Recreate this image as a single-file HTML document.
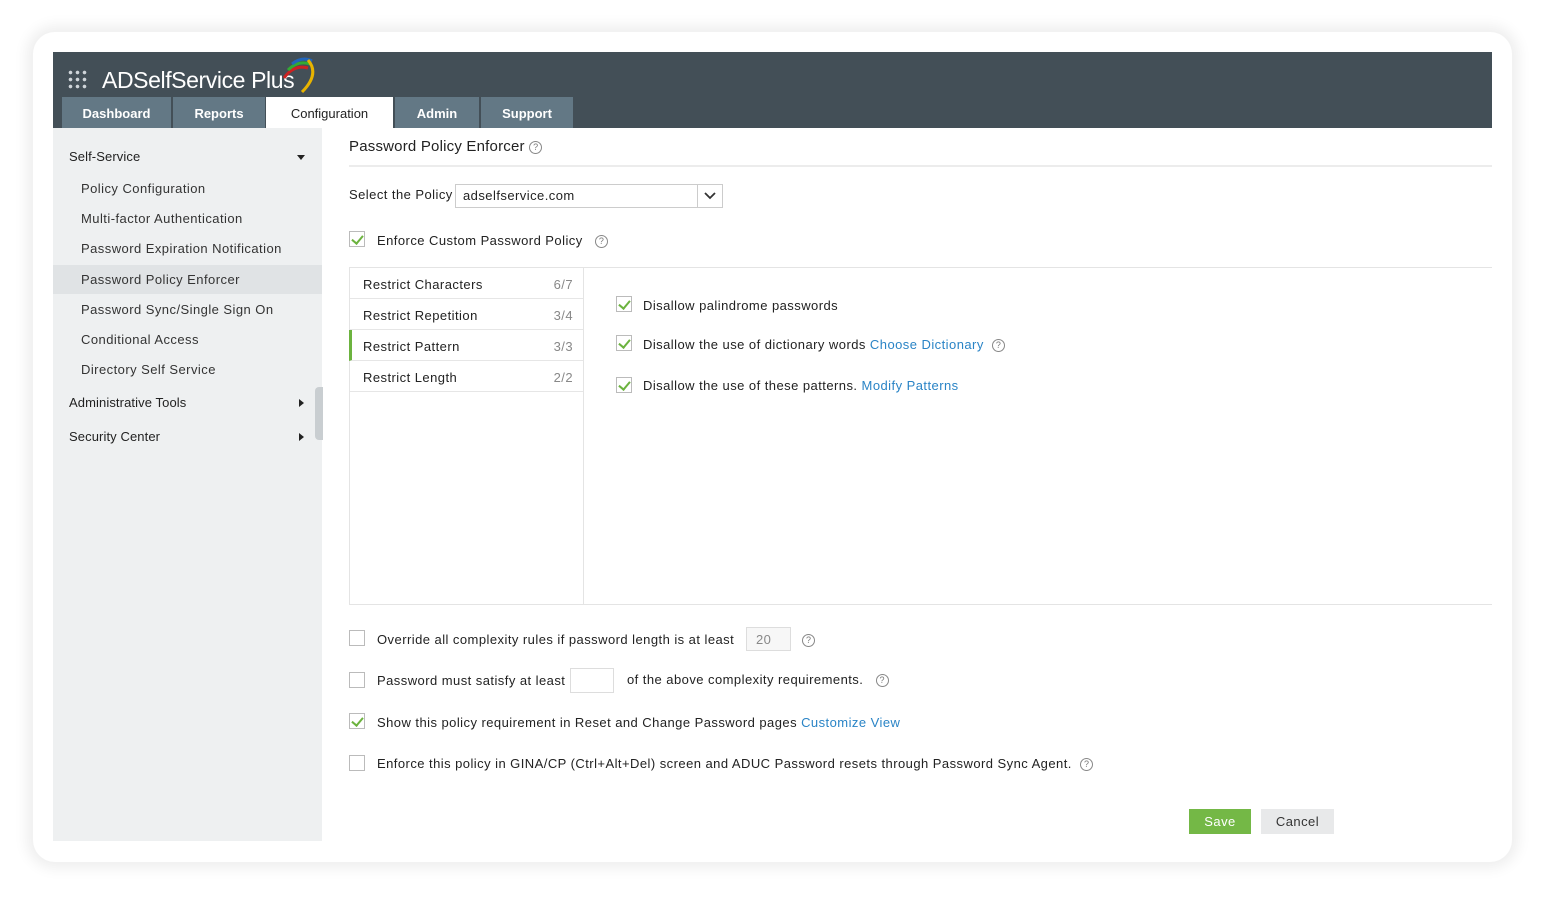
<!DOCTYPE html>
<html><head><meta charset="utf-8"><style>
*{box-sizing:border-box;margin:0;padding:0}
body{width:1546px;height:897px;background:#fff;font-family:"Liberation Sans",Arial,sans-serif;font-size:13px;color:#222;position:relative;overflow:hidden;letter-spacing:0.45px}
.card{position:absolute;left:33px;top:32px;width:1479px;height:830px;background:#fff;border-radius:22px;box-shadow:0 0 14px 6px rgba(0,0,0,0.07)}
.a{position:absolute}
.hdr{left:53px;top:52px;width:1439px;height:76px;background:#434f57}
.tab{position:absolute;top:97px;height:31px;background:#637885;color:#fff;font-weight:bold;text-align:center;line-height:33px;font-size:13px;letter-spacing:0}
.side{left:53px;top:128px;width:269px;height:713px;background:#eef0f1}
.si{position:absolute;left:81px;color:#333;font-size:13px}
.sh{position:absolute;left:69px;color:#222;font-size:13px;letter-spacing:0.1px}
.cb{position:absolute;width:16px;height:16px;border:1px solid #bbb;background:#fff}
.cb.on::after{content:"";position:absolute;left:4px;top:1px;width:5px;height:9px;border-right:2px solid #6cb33f;border-bottom:2px solid #6cb33f;transform:rotate(40deg)}
.t{position:absolute;white-space:nowrap}
.lnk{color:#2a84c6}
.q{display:inline-block;width:13px;height:13px;border:1px solid #888;border-radius:50%;font-size:9px;line-height:11px;text-align:center;color:#777;vertical-align:middle;letter-spacing:0}
.li{position:absolute;left:350px;width:233px;height:31px;border-bottom:1px solid #e6e6e6;background:#fff}
.li span{position:absolute;left:13px;top:9px}
.li b{position:absolute;right:10px;top:9px;font-weight:normal;color:#888}
.arr{position:absolute;width:0;height:0}
</style></head><body>
<div class="card"></div>
<div class="a hdr"></div>
<div class="a" style="left:67px;top:69px;width:20px;height:20px;background:radial-gradient(circle,#cfd5d9 1.6px,transparent 2px) 0 0/7px 7px"></div>
<div class="t" style="left:102px;top:67px;color:#fff;font-size:23px;letter-spacing:-0.4px">ADSelfService Plus</div>
<svg class="a" style="left:276px;top:56px" width="44" height="40"><path d="M8 22 Q18 8 32 12" stroke="#c22" stroke-width="3" fill="none"/><path d="M12 14 Q22 4 34 8" stroke="#3a3" stroke-width="3" fill="none"/><path d="M16 8 Q26 0 36 5" stroke="#26b" stroke-width="3" fill="none"/><path d="M32 4 Q44 18 26 36" stroke="#e8b400" stroke-width="3" fill="none"/></svg>
<div class="tab" style="left:62px;width:109px">Dashboard</div>
<div class="tab" style="left:173px;width:92px">Reports</div>
<div class="tab" style="left:266px;width:127px;background:#fff;color:#222;font-weight:normal;height:32px">Configuration</div>
<div class="tab" style="left:395px;width:84px">Admin</div>
<div class="tab" style="left:481px;width:92px">Support</div>
<div class="a side"></div>
<div class="a" style="left:53px;top:265px;width:269px;height:29px;background:#e0e3e5"></div>
<div class="sh" style="top:149px">Self-Service</div>
<div class="arr" style="left:297px;top:155px;border-left:4px solid transparent;border-right:4px solid transparent;border-top:5px solid #222"></div>
<div class="si" style="top:181px">Policy Configuration</div>
<div class="si" style="top:211px">Multi-factor Authentication</div>
<div class="si" style="top:241px">Password Expiration Notification</div>
<div class="si" style="top:272px">Password Policy Enforcer</div>
<div class="si" style="top:302px">Password Sync/Single Sign On</div>
<div class="si" style="top:332px">Conditional Access</div>
<div class="si" style="top:362px">Directory Self Service</div>
<div class="sh" style="top:395px">Administrative Tools</div>
<div class="arr" style="left:299px;top:399px;border-top:4px solid transparent;border-bottom:4px solid transparent;border-left:5px solid #222"></div>
<div class="sh" style="top:429px">Security Center</div>
<div class="arr" style="left:299px;top:433px;border-top:4px solid transparent;border-bottom:4px solid transparent;border-left:5px solid #222"></div>
<div class="a" style="left:315px;top:387px;width:8px;height:53px;background:#c9ced1;border-radius:4px 0 0 4px"></div>

<div class="t" style="left:349px;top:138px;font-size:15px;letter-spacing:0.2px">Password Policy Enforcer <span class="q">?</span></div>
<div class="a" style="left:349px;top:165px;width:1143px;height:2px;background:#ececec"></div>
<div class="t" style="left:349px;top:187px">Select the Policy</div>
<div class="a" style="left:455px;top:184px;width:268px;height:24px;border:1px solid #ccc;background:#fff"></div>
<div class="t" style="left:463px;top:188px">adselfservice.com</div>
<div class="a" style="left:697px;top:185px;width:1px;height:22px;background:#ccc"></div>
<svg class="a" style="left:703px;top:190px" width="14" height="12"><path d="M2 3 L7 8 L12 3" stroke="#333" stroke-width="1.8" fill="none"/></svg>
<div class="cb on" style="left:349px;top:231px"></div>
<div class="t" style="left:377px;top:233px">Enforce Custom Password Policy &nbsp;&nbsp;<span class="q">?</span></div>

<div class="a" style="left:349px;top:267px;width:1143px;height:338px;border-top:1px solid #e4e4e4;border-bottom:1px solid #e4e4e4"></div>
<div class="a" style="left:349px;top:268px;width:235px;height:336px;border-left:1px solid #e4e4e4;border-right:1px solid #e4e4e4;background:#fff"></div>
<div class="li" style="top:268px"><span>Restrict Characters</span><b>6/7</b></div>
<div class="li" style="top:299px"><span>Restrict Repetition</span><b>3/4</b></div>
<div class="li" style="top:330px;border-left:3px solid #6cb33f;left:349px;width:234px"><span style="left:11px">Restrict Pattern</span><b>3/3</b></div>
<div class="li" style="top:361px"><span>Restrict Length</span><b>2/2</b></div>
<div class="cb on" style="left:616px;top:296px"></div>
<div class="t" style="left:643px;top:298px">Disallow palindrome passwords</div>
<div class="cb on" style="left:616px;top:335px"></div>
<div class="t" style="left:643px;top:337px">Disallow the use of dictionary words <span class="lnk">Choose Dictionary</span> &nbsp;<span class="q">?</span></div>
<div class="cb on" style="left:616px;top:377px"></div>
<div class="t" style="left:643px;top:378px">Disallow the use of these patterns. <span class="lnk">Modify Patterns</span></div>

<div class="cb" style="left:349px;top:630px"></div>
<div class="t" style="left:377px;top:632px">Override all complexity rules if password length is at least</div>
<div class="a" style="left:746px;top:627px;width:45px;height:24px;border:1px solid #ddd;background:#f7f7f7;color:#888;padding:4px 9px">20</div>
<div class="t" style="left:802px;top:632px"><span class="q">?</span></div>
<div class="cb" style="left:349px;top:672px"></div>
<div class="t" style="left:377px;top:673px">Password must satisfy at least</div>
<div class="a" style="left:570px;top:668px;width:44px;height:25px;border:1px solid #ddd;background:#fff"></div>
<div class="t" style="left:627px;top:672px">of the above complexity requirements. &nbsp;&nbsp;<span class="q">?</span></div>
<div class="cb on" style="left:349px;top:713px"></div>
<div class="t" style="left:377px;top:715px">Show this policy requirement in Reset and Change Password pages <span class="lnk">Customize View</span></div>
<div class="cb" style="left:349px;top:755px"></div>
<div class="t" style="left:377px;top:756px">Enforce this policy in GINA/CP (Ctrl+Alt+Del) screen and ADUC Password resets through Password Sync Agent. &nbsp;<span class="q">?</span></div>

<div class="a" style="left:1189px;top:809px;width:62px;height:25px;background:#74b846;color:#fff;text-align:center;line-height:25px">Save</div>
<div class="a" style="left:1261px;top:809px;width:73px;height:25px;background:#e8e9ea;color:#333;text-align:center;line-height:25px">Cancel</div>
</body></html>
